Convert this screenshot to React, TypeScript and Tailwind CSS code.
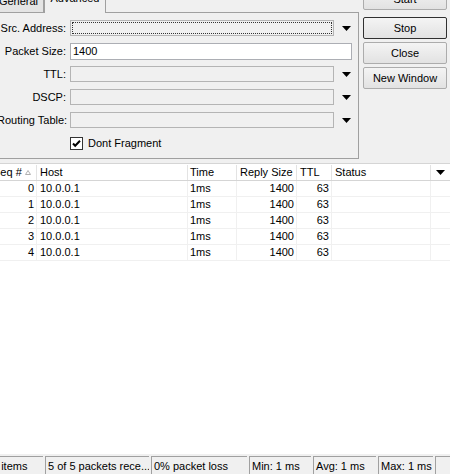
import React from "react";

const rows = [0, 1, 2, 3, 4];

function DropArrow() {
  return (
    <svg width="9" height="5" viewBox="0 0 9 5" className="block">
      <path d="M0 0h9L4.5 5z" fill="#000" />
    </svg>
  );
}

function FormRow({
  label,
  value,
  combo,
  focus,
}: {
  label: string;
  value?: string;
  combo?: boolean;
  focus?: boolean;
}) {
  return (
    <div className="flex items-center h-[16px]">
      <div className="w-[73px] pr-[4px] text-right whitespace-nowrap">{label}</div>
      {combo ? (
        <>
          <div className="w-[264px] h-[16px] border border-[#b4b4b4] bg-[#f0f0f0] p-px">
            {focus && <div className="w-full h-full border border-dotted border-[#333]" />}
          </div>
          <div className="w-[24px] flex justify-center">
            <DropArrow />
          </div>
        </>
      ) : (
        <div className="w-[282px] h-[17px] border border-[#acaeb4] bg-white pl-[2px] leading-[15px]">
          {value}
        </div>
      )}
    </div>
  );
}

function Btn({ children, dark }: { children: React.ReactNode; dark?: boolean }) {
  return (
    <div
      className={`h-[22px] w-[84px] flex items-center justify-center rounded-[2px] border bg-gradient-to-b from-[#f4f4f4] to-[#e2e2e2] ${
        dark ? "border-[#303030]" : "border-[#acacac]"
      }`}
    >
      {children}
    </div>
  );
}

function Seg({ w, children }: { w: string; children?: React.ReactNode }) {
  return (
    <div className={`${w} shrink-0 border-l border-t border-[#a0a0a0] pl-[2px] pt-[3px] whitespace-nowrap overflow-hidden`}>
      {children}
    </div>
  );
}

export default function App() {
  return (
    <div className="w-[450px] h-[474px] overflow-hidden bg-[#f0f0f0] text-black text-[11px] leading-[13px] font-['Liberation_Sans',Arial,sans-serif] flex flex-col">
      {/* top form area */}
      <div className="flex -mt-[12px] shrink-0">
        <div className="-ml-[4px] w-[363px] shrink-0">
          <div className="flex items-end h-[24px]">
            <div className="-ml-[3px] w-[51px] h-[20px] border border-b-0 border-[#a0a0a0] bg-[#e4e4e4] text-center pt-[2px]">
              General
            </div>
            <div className="w-[62px] h-[25px] -mb-px relative border border-b-0 border-[#a0a0a0] bg-[#f0f0f0] text-center pt-[3px]">
              Advanced
            </div>
          </div>
          <div className="h-[147px] border border-[#a0a0a0] pt-[7px] flex flex-col gap-[7px]">
            <FormRow label="Src. Address:" combo focus />
            <FormRow label="Packet Size:" value="1400" />
            <FormRow label="TTL:" combo />
            <FormRow label="DSCP:" combo />
            <FormRow label="Routing Table:" combo />
            <div className="flex items-center mt-[2px] pl-[73px] gap-[5px]">
              <svg width="13" height="13" viewBox="0 0 13 13" className="block">
                <rect x="0.5" y="0.5" width="12" height="12" fill="#fff" stroke="#333" />
                <path d="M3 6.5l2.2 2.3L10 3.8" fill="none" stroke="#000" strokeWidth="2" />
              </svg>
              <span>Dont Fragment</span>
            </div>
          </div>
        </div>
        <div className="ml-[4px] flex flex-col gap-[3px]">
          <Btn>Start</Btn>
          <div className="mt-[4px]">
            <Btn dark>Stop</Btn>
          </div>
          <Btn>Close</Btn>
          <Btn>New Window</Btn>
        </div>
      </div>

      {/* table */}
      <div className="mt-[4px] flex-1 bg-white flex flex-col overflow-hidden">
        <div className="flex h-[18px] border-t border-b border-[#d5d5d5] bg-white -ml-[8px] pt-[1px]">
          <div className="w-[45px] shrink-0 pl-[1px] border-r border-[#e3e3e3] flex items-center gap-[3px]">
            <span>Seq #</span>
            <svg width="6" height="5" viewBox="0 0 6 5" className="block">
              <path d="M0.5 4.5L3 0.5L5.5 4.5z" fill="none" stroke="#b0b0b0" />
            </svg>
          </div>
          <div className="w-[151px] shrink-0 pl-[3px] border-r border-[#e3e3e3] flex items-center">Host</div>
          <div className="w-[49px] shrink-0 pl-[2px] border-r border-[#e3e3e3] flex items-center">Time</div>
          <div className="w-[60px] shrink-0 pl-[3px] border-r border-[#e3e3e3] flex items-center">Reply Size</div>
          <div className="w-[35px] shrink-0 pl-[3px] border-r border-[#e3e3e3] flex items-center">TTL</div>
          <div className="w-[99px] shrink-0 pl-[3px] border-r border-[#e3e3e3] flex items-center">Status</div>
          <div className="w-[19px] shrink-0 flex items-center justify-center">
            <DropArrow />
          </div>
        </div>
        {rows.map((r) => (
          <div key={r} className="flex h-[16px] border-b border-[#f0f0f0] -ml-[8px]">
            <div className="w-[45px] shrink-0 pr-[2px] text-right border-r border-[#f0f0f0] leading-[15px]">{r}</div>
            <div className="w-[151px] shrink-0 pl-[3px] border-r border-[#f0f0f0] leading-[15px]">10.0.0.1</div>
            <div className="w-[49px] shrink-0 pl-[2px] border-r border-[#f0f0f0] leading-[15px]">1ms</div>
            <div className="w-[60px] shrink-0 pr-[2px] text-right border-r border-[#f0f0f0] leading-[15px]">1400</div>
            <div className="w-[35px] shrink-0 pr-[2px] text-right border-r border-[#f0f0f0] leading-[15px]">63</div>
            <div className="w-[99px] shrink-0 border-r border-[#f0f0f0]" />
            <div className="w-[19px] shrink-0" />
          </div>
        ))}
      </div>

      {/* status bar */}
      <div className="h-[20px] shrink-0 flex gap-[2px] -ml-[12px] pt-[2px] bg-[#f0f0f0]">
        <div className="w-[55px] shrink-0 border-l border-t border-[#a0a0a0] pl-[3px] pt-[3px]">5 items</div>
        <Seg w="w-[104px]">5 of 5 packets rece...</Seg>
        <Seg w="w-[96px]">0% packet loss</Seg>
        <Seg w="w-[62px]">Min: 1 ms</Seg>
        <Seg w="w-[63px]">Avg: 1 ms</Seg>
        <Seg w="w-[55px]">Max: 1 ms</Seg>
        <Seg w="w-[30px]" />
      </div>
    </div>
  );
}
